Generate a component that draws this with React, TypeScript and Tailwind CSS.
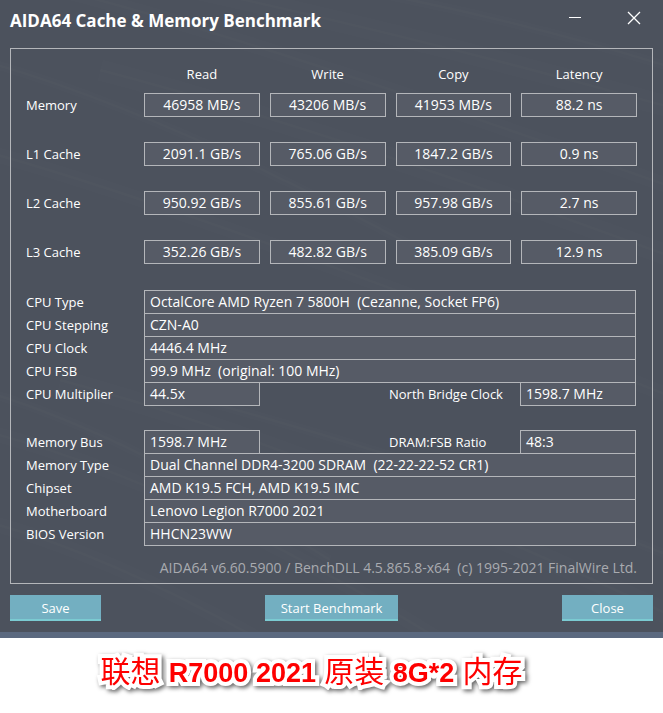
import React from "react";

const columns = ["Read", "Write", "Copy", "Latency"];

const results = [
  { name: "Memory", values: ["46958 MB/s", "43206 MB/s", "41953 MB/s", "88.2 ns"] },
  { name: "L1 Cache", values: ["2091.1 GB/s", "765.06 GB/s", "1847.2 GB/s", "0.9 ns"] },
  { name: "L2 Cache", values: ["950.92 GB/s", "855.61 GB/s", "957.98 GB/s", "2.7 ns"] },
  { name: "L3 Cache", values: ["352.26 GB/s", "482.82 GB/s", "385.09 GB/s", "12.9 ns"] },
];

type Spec = { label: string; value: string; side?: { label: string; value: string } };

const cpuSpecs: Spec[] = [
  { label: "CPU Type", value: "OctalCore AMD Ryzen 7 5800H  (Cezanne, Socket FP6)" },
  { label: "CPU Stepping", value: "CZN-A0" },
  { label: "CPU Clock", value: "4446.4 MHz" },
  { label: "CPU FSB", value: "99.9 MHz  (original: 100 MHz)" },
  { label: "CPU Multiplier", value: "44.5x", side: { label: "North Bridge Clock", value: "1598.7 MHz" } },
];

const memorySpecs: Spec[] = [
  { label: "Memory Bus", value: "1598.7 MHz", side: { label: "DRAM:FSB Ratio", value: "48:3" } },
  { label: "Memory Type", value: "Dual Channel DDR4-3200 SDRAM  (22-22-22-52 CR1)" },
  { label: "Chipset", value: "AMD K19.5 FCH, AMD K19.5 IMC" },
  { label: "Motherboard", value: "Lenovo Legion R7000 2021" },
  { label: "BIOS Version", value: "HHCN23WW" },
];

function SpecValue({ children, className }: { children: string; className: string }) {
  return (
    <dd
      className={`h-6 whitespace-pre border border-[#b4b6ba] bg-[#565b66] px-[5px] text-sm leading-[22px] ${className}`}
    >
      {children}
    </dd>
  );
}

function SpecList({ specs }: { specs: Spec[] }) {
  return (
    <dl className="pr-px pb-px">
      {specs.map((spec) => (
        <div key={spec.label} className="flex h-[23px]">
          <dt className="w-[118px] shrink-0 leading-6">{spec.label}</dt>
          {spec.side ? (
            <>
              <SpecValue className="w-[116px]">{spec.value}</SpecValue>
              <dt className="ml-auto w-[131px] leading-6">{spec.side.label}</dt>
              <SpecValue className="w-[116px]">{spec.side.value}</SpecValue>
            </>
          ) : (
            <SpecValue className="flex-1">{spec.value}</SpecValue>
          )}
        </div>
      ))}
    </dl>
  );
}

function ActionButton({ children, className }: { children: string; className: string }) {
  return (
    <button
      type="button"
      className={`h-[26px] border-b-2 border-[#7bcbd2] bg-[#73afc1] text-center leading-[26px] ${className}`}
    >
      {children}
    </button>
  );
}

const streaks = [
  "M-20 60 Q160 110 420 250",
  "M60 -10 Q260 40 680 190",
  "M200 -10 Q430 40 680 110",
  "M360 -10 Q520 20 680 70",
  "M-20 150 Q200 210 680 400",
  "M100 70 Q330 130 680 260",
  "M-20 390 Q120 430 330 560",
  "M-20 430 Q180 480 440 640",
  "M60 380 Q320 450 680 620",
  "M200 400 Q460 470 680 560",
  "M-20 520 Q100 550 260 640",
];

function BrushedBackdrop() {
  return (
    <svg
      aria-hidden="true"
      className="absolute inset-0 h-full w-full"
      viewBox="0 0 663 632"
      preserveAspectRatio="none"
      fill="none"
      stroke="#ffffff"
    >
      {streaks.map((d, i) => (
        <g key={d}>
          <path d={d} strokeOpacity="0.008" strokeWidth={10 + (i % 3) * 6} />
          <path d={d} strokeOpacity="0.012" strokeWidth="3" />
        </g>
      ))}
    </svg>
  );
}

export default function App() {
  return (
    <div className="min-h-screen bg-white font-['Open_Sans','Noto_Sans',sans-serif] text-[13px] text-white">
      <main className="relative border-b-6 border-[#5b697f] bg-[#4c525d]">
        <BrushedBackdrop />
        <div className="relative px-[10px] pb-[11px]">
          <header className="flex h-12 justify-between">
            <h1 className="pt-2 text-[17px] leading-[26px] font-bold">AIDA64 Cache &amp; Memory Benchmark</h1>
            <div className="flex gap-9 pt-1 pr-[6px]">
              <button type="button" aria-label="Minimize" className="h-7 w-6">
                <svg viewBox="0 0 24 28" className="h-7 w-6" stroke="currentColor" fill="none">
                  <path d="M6 13.5H18" />
                </svg>
              </button>
              <button type="button" aria-label="Close window" className="h-7 w-6">
                <svg viewBox="0 0 24 28" className="h-7 w-6" stroke="currentColor" strokeWidth="1.3" fill="none">
                  <path d="M5 8L17 20M17 8L5 20" />
                </svg>
              </button>
            </div>
          </header>

          <section className="border border-[#b4b6ba] px-[15px] pt-[13px] pb-[3px]">
            <table className="block w-full">
              <thead className="block">
                <tr className="grid grid-cols-[108px_repeat(4,1fr)] gap-x-[10px]">
                  <td />
                  {columns.map((column) => (
                    <th key={column} scope="col" className="text-center leading-6 font-normal">
                      {column}
                    </th>
                  ))}
                </tr>
              </thead>
              <tbody className="mt-[7px] flex flex-col gap-[25px]">
                {results.map((row) => (
                  <tr key={row.name} className="grid grid-cols-[108px_repeat(4,1fr)] gap-x-[10px]">
                    <th scope="row" className="text-left leading-6 font-normal">
                      {row.name}
                    </th>
                    {row.values.map((value, i) => (
                      <td
                        key={columns[i]}
                        className="h-6 border border-[#b4b6ba] bg-[#565b66] text-center text-sm leading-[22px]"
                      >
                        {value}
                      </td>
                    ))}
                  </tr>
                ))}
              </tbody>
            </table>

            <div className="mt-[26px] flex flex-col gap-6">
              <SpecList specs={cpuSpecs} />
              <SpecList specs={memorySpecs} />
            </div>

            <p className="mt-[10px] text-right text-sm leading-6 whitespace-pre text-[#a9abb0]">
              AIDA64 v6.60.5900 / BenchDLL 4.5.865.8-x64  (c) 1995-2021 FinalWire Ltd.
            </p>
          </section>

          <div className="mt-[11px] flex justify-between">
            <ActionButton className="w-[91px]">Save</ActionButton>
            <ActionButton className="w-[133px]">Start Benchmark</ActionButton>
            <ActionButton className="w-[91px]">Close</ActionButton>
          </div>
        </div>
      </main>

      <p className="mt-[14px] pr-10 text-center font-['Liberation_Sans','Noto_Sans_CJK_SC',sans-serif] text-[30px] leading-10 text-[#fe0000] drop-shadow-[2px_2px_2px_rgba(0,0,0,0.6)] [-webkit-text-stroke:8px_white] [paint-order:stroke_fill]">
        联想 <b className="text-[27px]">R7000 2021</b> 原装 <b className="text-[27px]">8G*2</b> 内存
      </p>
    </div>
  );
}
